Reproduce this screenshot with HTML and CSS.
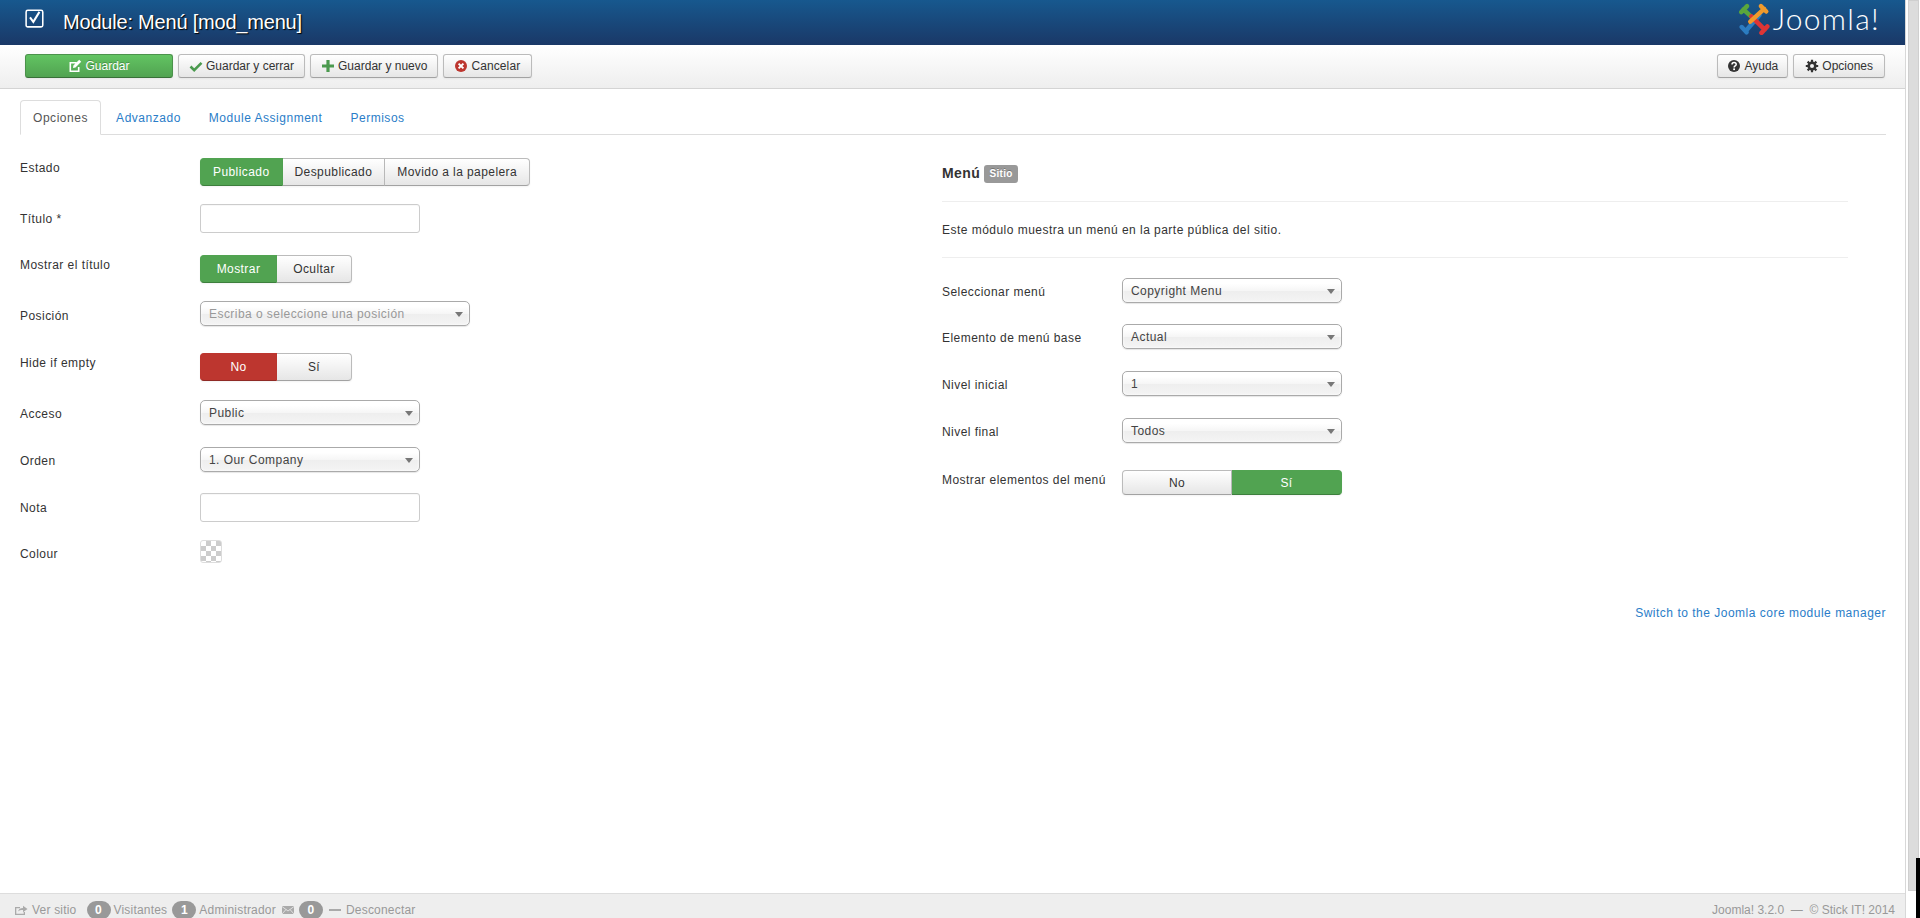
FILE: index.html
```html
<!DOCTYPE html>
<html lang="es">
<head>
<meta charset="utf-8">
<title>Module: Menú [mod_menu]</title>
<link rel="stylesheet" href="styles.css">
</head>
<body>
<div class="app">
  <div class="page">
    <header class="topbar">
      <div class="title-wrap">
        <svg class="title-icon" viewBox="0 0 18 18" width="20" height="20"><rect x="1" y="2" width="15" height="15" rx="1.5" fill="none" stroke="#fff" stroke-width="1.4"/><path d="M4.500 8.500l3 4L13 3.500" fill="none" stroke="#fff" stroke-width="1.800"/></svg>
        <h1 class="title">Module: Menú [mod_menu]</h1>
      </div>
      <div class="brand">
        <svg class="brand-mark" viewBox="0 0 30 30" width="32" height="32">
          <g fill="none" stroke-width="4.200" stroke-linecap="round" stroke-linejoin="round">
            <path d="M5 6l12.500 11.500M3 8.500L8.500 3" stroke="#5aa63c"/>
            <path d="M7.500 26L20 11.500M3.500 22.500L8 27.500" stroke="#2c7cc0"/>
            <path d="M25 25L12.500 12.500M22 28L27.500 22" stroke="#de3535"/>
            <path d="M24.500 5.500L11.500 17.500M21.500 3L26.500 8" stroke="#f09a2c"/>
          </g>
        </svg>
        <span class="brand-name">Joomla!</span>
      </div>
    </header>

    <nav class="toolbar">
      <div class="toolbar-group">
        <button class="btn btn-save"><svg class="ico" viewBox="0 0 14 14"><path d="M1.500 3h7v1.600H3.100v6.800h6.800V8h1.600v5h-10zM11.200.8l2 2L7.500 8.600 5 9l.4-2.500z" fill="#fff"/></svg>Guardar</button>
        <button class="btn"><svg class="ico" viewBox="0 0 14 14"><path d="M1.500 7.500l3.700 3.700L12.500 3.800" fill="none" stroke="#4b9a4f" stroke-width="2.600"/></svg>Guardar y cerrar</button>
        <button class="btn"><svg class="ico" viewBox="0 0 14 14"><path d="M7 1v12M1 7h12" fill="none" stroke="#4b9a4f" stroke-width="3.200"/></svg>Guardar y nuevo</button>
        <button class="btn btn-cancel"><svg class="ico" viewBox="0 0 14 14"><circle cx="7" cy="7" r="6" fill="#bd362f"/><path d="M4.600 4.600l4.800 4.800M9.400 4.600L4.600 9.400" stroke="#fff" stroke-width="2"/></svg>Cancelar</button>
      </div>
      <div class="toolbar-group">
        <button class="btn btn-help"><svg class="ico" viewBox="0 0 14 14"><circle cx="7" cy="7" r="6" fill="#333"/><path d="M5 5.400c0-2.400 4.200-2.400 4.200 0 0 1.500-2.100 1.500-2.100 3" fill="none" stroke="#fff" stroke-width="1.500"/><rect x="6.200" y="9.400" width="1.800" height="1.700" fill="#fff"/></svg>Ayuda</button>
        <button class="btn btn-opts"><svg class="ico" viewBox="0 0 14 14"><circle cx="7" cy="7" r="3.300" fill="none" stroke="#333" stroke-width="2.600"/><path d="M7 .8v2.400M7 10.800v2.400M.8 7h2.400M10.800 7h2.400M2.600 2.600l1.700 1.700M9.700 9.700l1.700 1.700M11.400 2.600L9.700 4.300M4.300 9.700l-1.700 1.700" stroke="#333" stroke-width="2.200"/></svg>Opciones</button>
      </div>
    </nav>

    <main class="content">
      <ul class="tabs">
        <li class="tab tab-active">Opciones</li>
        <li class="tab">Advanzado</li>
        <li class="tab">Module Assignment</li>
        <li class="tab">Permisos</li>
      </ul>

      <div class="columns">
        <section class="col-left">
          <div class="row row-h46">
            <label class="label">Estado</label>
            <div class="segment"><span class="seg seg-on">Publicado</span><span class="seg">Despublicado</span><span class="seg">Movido a la papelera</span></div>
          </div>
          <div class="row row-h51">
            <label class="label label-mid">Título *</label>
            <div class="input"></div>
          </div>
          <div class="row row-h46">
            <label class="label">Mostrar el título</label>
            <div class="segment"><span class="seg seg-on seg-fixed">Mostrar</span><span class="seg seg-fixed">Ocultar</span></div>
          </div>
          <div class="row row-h52">
            <label class="label label-mid">Posición</label>
            <div class="select select-wide select-muted">Escriba o seleccione una posición</div>
          </div>
          <div class="row row-h47">
            <label class="label">Hide if empty</label>
            <div class="segment"><span class="seg seg-danger seg-fixed">No</span><span class="seg seg-fixed">Sí</span></div>
          </div>
          <div class="row row-h47">
            <label class="label label-low">Acceso</label>
            <div class="select">Public</div>
          </div>
          <div class="row row-h46">
            <label class="label label-low">Orden</label>
            <div class="select">1. Our Company</div>
          </div>
          <div class="row row-h47">
            <label class="label label-mid">Nota</label>
            <div class="input"></div>
          </div>
          <div class="row">
            <label class="label label-low">Colour</label>
            <div class="swatch"></div>
          </div>
        </section>

        <section class="col-right">
          <h2 class="module-name">Menú <span class="tag">Sitio</span></h2>
          <p class="module-desc">Este módulo muestra un menú en la parte pública del sitio.</p>
          <div class="row row-h46">
            <label class="label label-r">Seleccionar menú</label>
            <div class="select">Copyright Menu</div>
          </div>
          <div class="row row-h47">
            <label class="label label-r">Elemento de menú base</label>
            <div class="select">Actual</div>
          </div>
          <div class="row row-h47">
            <label class="label label-r">Nivel inicial</label>
            <div class="select">1</div>
          </div>
          <div class="row row-h52">
            <label class="label label-r">Nivel final</label>
            <div class="select">Todos</div>
          </div>
          <div class="row">
            <label class="label label-r label-high">Mostrar elementos del menú</label>
            <div class="segment segment-full"><span class="seg seg-half">No</span><span class="seg seg-half seg-on">Sí</span></div>
          </div>
        </section>
      </div>

      <div class="switch-row"><a class="switch-link">Switch to the Joomla core module manager</a></div>
    </main>

    <footer class="status">
      <div class="status-left">
        <span class="status-item"><svg class="ico-s" viewBox="0 0 14 12"><path d="M1 3h5v1.300H2.300v5.400h7.400V8H11v3H1z" fill="#aaa"/><path d="M4 7.500c.5-2.500 2.500-3.500 5-3.500V1.800L13.500 5 9 8.200V6C7 6 5 6.300 4 7.500z" fill="#aaa"/></svg>Ver sitio</span>
        <span class="status-item status-gap"><span class="count">0</span>Visitantes</span>
        <span class="status-item"><span class="count">1</span>Administrador</span>
        <span class="status-item"><svg class="ico-s" viewBox="0 0 14 12"><rect x="1" y="2" width="12" height="8" fill="#aaa"/><path d="M1 2.500L7 7l6-4.500M1 10l4-4.500M13 10L9 5.500" fill="none" stroke="#eee" stroke-width=".8"/></svg><span class="count">0</span></span>
        <span class="status-item"><svg class="ico-s" viewBox="0 0 14 12"><rect x="1" y="5" width="12" height="2" fill="#aaa"/></svg>Desconectar</span>
      </div>
      <div class="status-right">Joomla! 3.2.0 &nbsp;— &nbsp;© Stick IT! 2014</div>
    </footer>
  </div>
  <div class="scrollbar"><div class="thumb"></div><div class="black-edge"></div></div>
</div>
</body>
</html>
```

FILE: styles.css
```css
* { box-sizing: border-box; }
html, body { margin: 0; height: 100%; overflow: hidden; }
body { font-family: "Liberation Sans", Arial, sans-serif; font-size: 12px; color: #333; background: #fff; }

.app { display: flex; height: 918px; position: relative; }
.page { width: 1905px; display: flex; flex-direction: column; height: 100%; }

.topbar { height: 45px; flex: none; display: flex; justify-content: space-between; background: linear-gradient(#17588e, #1a3867); padding: 0 25px; }
.title-wrap { display: flex; align-items: flex-start; }
.title-icon { margin-top: 8px; }
.title { margin: 10px 0 0 18px; font-size: 20px; line-height: 24px; font-weight: 400; letter-spacing: -.2px; color: #fff; text-shadow: 1px 1px 1px #000; }
.brand { display: flex; align-items: flex-start; }
.brand-mark { margin-top: 3px; }
.brand-name { font-family: Lato, "Open Sans", sans-serif; font-weight: 300; font-size: 30px; line-height: 36px; color: #fff; margin-left: 3px; letter-spacing: 1.300px; }

.toolbar { height: 44px; flex: none; display: flex; justify-content: space-between; align-items: flex-start; padding: 9px 20px 0 25px; background: linear-gradient(#fff, #eee); border-bottom: 1px solid #d4d4d4; }
.toolbar-group { display: flex; gap: 5px; }
.btn { height: 24px; padding: 0 10px; display: flex; align-items: center; gap: 3px; font: 12px "Liberation Sans", Arial, sans-serif; color: #333; background: linear-gradient(#fff, #e6e6e6); border: 1px solid #bbb; border-bottom-color: #a2a2a2; border-radius: 3px; box-shadow: 0 1px 2px rgba(0,0,0,.05); }
.btn-save { width: 148px; justify-content: center; color: #fff; background: linear-gradient(#62c462, #51a351); border-color: #4b924b; border-bottom-color: #387038; text-shadow: 0 -1px 0 rgba(0,0,0,.25); }
.btn-cancel { padding: 0 11px 0 10px; letter-spacing: .1px; }
.btn-help { padding: 0 9px; }
.btn-opts { padding: 0 11px; }
.ico { width: 14px; height: 14px; flex: none; }

.content { flex: 1; padding: 11px 19px 0 20px; overflow: hidden; }
.tabs { list-style: none; margin: 0; padding: 0; height: 35px; display: flex; border-bottom: 1px solid #ddd; }
.tab { height: 35px; line-height: 36px; padding: 0 14px; color: #2a7dc8; letter-spacing: .52px; }
.tab-active { color: #555; background: #fff; border: 1px solid #ddd; border-bottom-color: #fff; border-radius: 4px 4px 0 0; padding: 0 12px; line-height: 34px; margin-right: 1px; letter-spacing: .55px; }

.columns { display: flex; padding-top: 23px; }
.col-left { width: 922px; flex: none; }
.col-right { width: 906px; flex: none; }

.row { display: flex; align-items: flex-start; }
.row-h46 { height: 46px; }
.row-h47 { height: 47px; }
.row-h51 { height: 51px; }
.row-h52 { height: 52px; }
.label { width: 180px; flex: none; line-height: 18px; padding-top: 1px; color: #333; letter-spacing: .45px; }
.label-low { padding-top: 5px; }
.label-mid { padding-top: 6px; }
.label-r { padding-top: 5px; white-space: nowrap; }
.label-high { padding-top: 1px; }

.segment { display: inline-flex; height: 28px; }
.seg { display: flex; align-items: center; justify-content: center; padding: 0 12px; height: 100%; background: linear-gradient(#fff, #e6e6e6); border: 1px solid #bbb; border-left-width: 0; border-bottom-color: #a2a2a2; letter-spacing: .42px; color: #333; box-shadow: 0 1px 2px rgba(0,0,0,.05); }
.seg:first-child { border-left-width: 1px; border-radius: 4px 0 0 4px; }
.seg:last-child { border-radius: 0 4px 4px 0; }
.seg-on { background: #51a351; border-color: #51a351; border-bottom-color: #3d7f3d; color: #fff; }
.seg-danger { background: #bd362f; border-color: #bd362f; border-bottom-color: #8f2a25; color: #fff; }
.seg-fixed { width: 75px; padding: 0; }
.seg-fixed:first-child { width: 77px; }
.segment-full { width: 220px; height: 25px; }
.seg-half { width: 110px; padding: 0; }

.input { width: 220px; height: 29px; border: 1px solid #ccc; border-radius: 3px; background: #fff; box-shadow: inset 0 1px 1px rgba(0,0,0,.03); }

.select { position: relative; width: 220px; height: 25px; line-height: 24px; padding-left: 8px; color: #444; border: 1px solid #aaa; border-radius: 5px; letter-spacing: .45px; background: linear-gradient(#fff 20%, #f6f6f6 50%, #eee 52%, #f4f4f4); box-shadow: inset 0 0 3px #fff, 0 1px 1px rgba(0,0,0,.1); }
.select::after { content: ""; position: absolute; right: 6px; top: 10px; border: 4px solid transparent; border-top: 5px solid #777; border-bottom-width: 0; }
.select-wide { width: 270px; }
.select-muted { color: #999; }

.swatch { width: 22px; height: 23px; border: 1px solid #ddd; border-radius: 3px; background-color: #fff; background-image: conic-gradient(#ccc 25%, #fff 25% 50%, #ccc 50% 75%, #fff 75%); background-size: 10px 10px; }

.module-name { margin: 0; font-size: 14px; line-height: 22px; font-weight: 700; letter-spacing: .4px; color: #333; padding-top: 4px; padding-bottom: 17px; border-bottom: 1px solid #eee; }
.tag { display: inline-block; vertical-align: 1px; padding: 0 5px; font-size: 10px; line-height: 18px; font-weight: 700; letter-spacing: .3px; color: #fff; background: #999; border-radius: 3px; text-shadow: 0 -1px 0 rgba(0,0,0,.25); }
.module-desc { margin: 0 0 20px; padding: 20px 0 18px; line-height: 17px; letter-spacing: .47px; border-bottom: 1px solid #eee; }

.switch-row { margin-top: 41px; text-align: right; line-height: 18px; }
.switch-link { color: #2a7dc8; letter-spacing: .5px; }

.status { height: 25px; flex: none; display: flex; justify-content: space-between; padding: 0 10px 0 14px; background: #eee; border-top: 1px solid #ddd; color: #999; line-height: 32px; overflow: hidden; }
.status-left { display: flex; gap: 5px; }
.status-item { display: flex; gap: 3px; align-items: flex-start; letter-spacing: .2px; }
.status-gap { margin-left: 5px; }
.ico-s { width: 14px; height: 12px; margin-top: 10px; margin-right: 1px; }
.count { display: inline-block; width: 24px; height: 18px; margin-top: 7px; line-height: 18px; text-align: center; color: #fff; background: #999; border-radius: 9px; font-weight: 700; }

.scrollbar { width: 15px; flex: none; position: relative; border-left: 1px solid #d8d8d8; background: #fff; }
.thumb { position: absolute; left: 2px; right: 1px; top: 0; height: 891px; background: #dcdcdc; border: 1px solid #cfcfcf; }
.black-edge { position: absolute; right: 0; top: 858px; bottom: 0; width: 4px; background: #000; }
```
